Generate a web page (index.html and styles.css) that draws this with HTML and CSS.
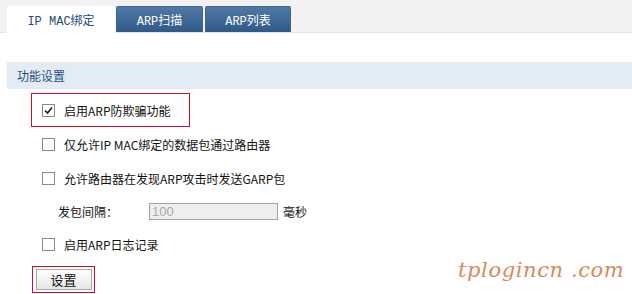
FILE: index.html
```html
<!DOCTYPE html>
<html lang="zh-CN">
<head>
<meta charset="utf-8">
<title>ARP</title>
<link rel="stylesheet" href="styles.css">
</head>
<body>
<div class="topbar">
  <div class="tab active">IP MAC绑定</div>
  <div class="tab t2">ARP扫描</div>
  <div class="tab t3">ARP列表</div>
</div>
<div class="section">功能设置</div>
<div class="form">
  <div class="row boxed"><span class="cb checked"><svg width="9" height="9" viewBox="0 0 9 9"><path d="M1 4.5 L3.5 7 L8 1.5" fill="none" stroke="#1a1a1a" stroke-width="1.6"/></svg></span><span class="lbl">启用ARP防欺骗功能</span></div>
  <div class="row"><span class="cb"></span><span class="lbl">仅允许IP MAC绑定的数据包通过路由器</span></div>
  <div class="row"><span class="cb"></span><span class="lbl">允许路由器在发现ARP攻击时发送GARP包</span></div>
  <div class="row interval"><span class="ilabel">发包间隔：</span><span class="input">100</span><span class="unit">毫秒</span></div>
  <div class="row r4"><span class="cb"></span><span class="lbl">启用ARP日志记录</span></div>
  <div class="btnwrap"><div class="btn">设置</div></div>
</div>
<div class="watermark">tplogincn .com</div>
</body>
</html>
```
FILE: styles.css
```css
html, body { margin: 0; padding: 0; background: #fff; }
body {
  width: 632px; height: 294px; overflow: hidden; position: relative;
  font-family: "Noto Sans CJK SC", "Liberation Sans", sans-serif;
  font-size: 12px; color: #111;
}
.topbar {
  height: 32px; background: #f2f2f2; border-bottom: 1px solid #e4e4e4;
  display: flex; align-items: flex-end; padding-left: 7px; gap: 1px;
}
.tab {
  height: 26px; margin-bottom: -1px; box-sizing: border-box;
  display: flex; align-items: center; justify-content: center;
  font-family: "Liberation Mono", "Noto Sans CJK SC", monospace; font-size: 12px;
  border-radius: 2px 2px 0 0;
}
.tab.active { width: 108px; background: #fff; color: #1d4d7c; height: 27px; }
.tab.t2, .tab.t3 {
  background: linear-gradient(#5079a6, #2f5987); color: #fff; margin-bottom: 0;
  border: 1px solid #3f6690; border-bottom: none;
}
.tab.t2 { width: 87px; }
.tab.t3 { width: 86px; margin-left: 1px; }
.section {
  margin: 29px 0 0 7px; height: 27px; background: #e4ecf3;
  display: flex; align-items: center; padding-left: 10px;
  color: #1f4f80; font-size: 12px;
}
.form { display: flex; flex-direction: column; padding-top: 4px; }
.row { height: 34px; display: flex; align-items: center; padding-left: 42px; box-sizing: border-box; }
.row.boxed { margin-left: 31px; width: 159px; padding-left: 10px; border: 1px solid #c8102e; }
.row.interval { height: 32px; padding-left: 58px; }
.cb {
  width: 11px; height: 11px; border: 1px solid #8a8a8a; background: #fff;
  display: inline-flex; align-items: center; justify-content: center; margin-right: 9px;
}
.lbl { white-space: nowrap; }
.ilabel { width: 91px; }
.input {
  width: 129px; height: 17px; box-sizing: border-box; background: #eeeeee;
  border: 1px solid #9ea4a8; color: #a8a8a8; padding-left: 2px;
  display: flex; align-items: center; font-family: "Liberation Sans", sans-serif; font-size: 13px;
}
.unit { margin-left: 5px; }
.btnwrap {
  margin: 5px 0 0 32px; width: 63px; height: 27px; box-sizing: border-box;
  border: 1px solid #c8102e; display: flex; align-items: center; justify-content: center;
}
.btn {
  width: 56px; height: 21px; box-sizing: border-box; border: 1px solid #a9a9a9;
  background: linear-gradient(#ffffff, #e6e6e6); display: flex; align-items: center; justify-content: center;
  font-size: 13px;
}
.watermark {
  position: absolute; left: 458px; top: 258px;
  font-family: "DejaVu Serif", serif; font-style: italic; font-size: 21px;
  color: #d7895c; letter-spacing: 0.6px; white-space: pre;
}
```
